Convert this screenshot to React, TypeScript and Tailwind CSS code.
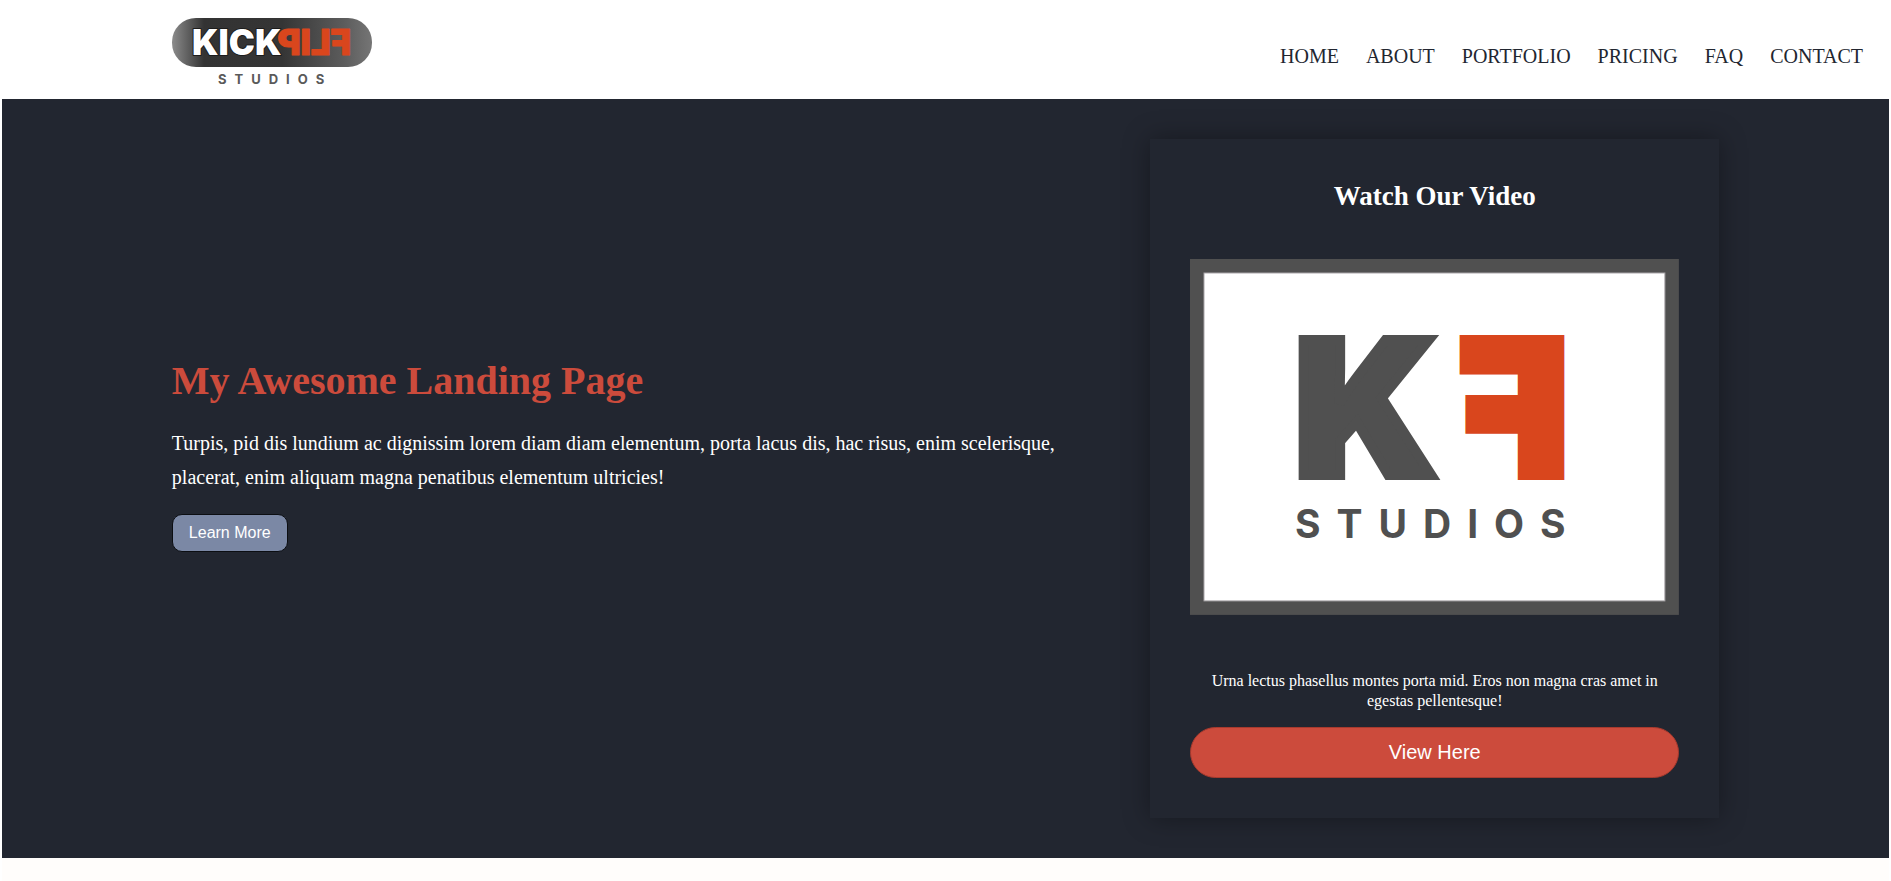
const links = ['Home', 'About', 'Portfolio', 'Pricing', 'FAQ', 'Contact'];

function Logo() {
  return (
    <svg viewBox="0 0 200 68" className="h-[68px] w-[200px]" role="img" aria-label="Kickflip Studios">
      <defs>
        <linearGradient id="pill" x1="0" y1="0" x2="1" y2="0">
          <stop offset="0" stopColor="#8c8c8c" />
          <stop offset="0.06" stopColor="#6a6a6a" />
          <stop offset="0.16" stopColor="#333333" />
          <stop offset="0.55" stopColor="#353535" />
          <stop offset="0.86" stopColor="#5c5c5c" />
          <stop offset="1" stopColor="#757575" />
        </linearGradient>
      </defs>
      <rect x="0" y="0" width="200" height="49" rx="24" fill="url(#pill)" />
      <g fontFamily="Inter, sans-serif" fontWeight="900" fontSize="35" paintOrder="stroke" strokeLinejoin="round">
        <text transform="translate(179 37) scale(-1 1)" fill="#d9461d" stroke="#d9461d" strokeWidth="1">FLIP</text>
        <text x="20" y="37" fill="#ffffff" stroke="#1c1c1c" strokeWidth="2">KICK</text>
      </g>
      <text x="46" y="66" fontFamily="Inter, sans-serif" fontWeight="700" fontSize="13" letterSpacing="8" fill="#5a5a5a">
        STUDIOS
      </text>
    </svg>
  );
}

function VideoPoster() {
  return (
    <svg viewBox="0 0 489 356" className="block h-auto w-full" role="img" aria-label="KF Studios">
      <rect width="489" height="356" fill="#505050" />
      <rect x="14" y="14" width="461" height="328" fill="#ffffff" stroke="#a8a4a8" />
      <g fontFamily="Inter, sans-serif" fontWeight="900" fontSize="185" strokeWidth="10" strokeLinejoin="miter">
        <text x="105" y="216" fill="#505050" stroke="#505050">K</text>
        <text transform="translate(378 216) scale(-1 1)" fill="#d9461d" stroke="#d9461d">F</text>
      </g>
      <text x="105" y="279" fontFamily="Inter, sans-serif" fontWeight="700" fontSize="39" letterSpacing="16" fill="#505050">
        STUDIOS
      </text>
    </svg>
  );
}

export default function App() {
  return (
    <div className="min-h-screen bg-white px-[2px] font-['Liberation_Serif',serif]">
      <header className="flex h-[99px] items-start justify-between pr-[26px] pl-[9%]">
        <a href="#home" className="pt-[18px]">
          <Logo />
        </a>
        <nav className="pt-11">
          <ul className="flex gap-[27px] text-[20px] leading-6 text-[#222630] uppercase">
            {links.map((l) => (
              <li key={l}>
                <a href={`#${l.toLowerCase()}`}>{l}</a>
              </li>
            ))}
          </ul>
        </nav>
      </header>

      <main className="bg-[#fffdfb]">
        <section className="grid grid-cols-[43fr_25fr] items-center bg-[#222630] px-[9%] py-10 text-white">
          <div className="pr-20">
            <h1 className="text-[40px] leading-[46px] font-bold text-[#cc4b3c]">My Awesome Landing Page</h1>
            <p className="mt-[22px] text-[20px] leading-[34px]">
              Turpis, pid dis lundium ac dignissim lorem diam diam elementum, porta lacus dis, hac risus, enim
              scelerisque, placerat, enim aliquam magna penatibus elementum ultricies!
            </p>
            <button
              type="button"
              className="mt-5 mb-[46px] rounded-[10px] border border-[#0c0e12] bg-[#7b88a5] px-4 py-[6px] font-['Liberation_Sans',sans-serif] text-[16px] leading-6"
            >
              Learn More
            </button>
          </div>

          <article className="p-10 text-center shadow-[0_0_25px_0_rgba(0,0,0,0.35)]">
            <h2 className="text-[27px] leading-[35px] font-bold">Watch Our Video</h2>
            <div className="mt-[45px]">
              <VideoPoster />
            </div>
            <p className="mt-14 px-4 text-[16px] leading-5">
              Urna lectus phasellus montes porta mid. Eros non magna cras amet in egestas pellentesque!
            </p>
            <button
              type="button"
              className="mt-4 w-full rounded-full border border-[#a83a2e] bg-[#cc4b3c] py-3 font-['Liberation_Sans',sans-serif] text-[20px] leading-[25px]"
            >
              View Here
            </button>
          </article>
        </section>
        <div className="h-6" />
      </main>
    </div>
  );
}
